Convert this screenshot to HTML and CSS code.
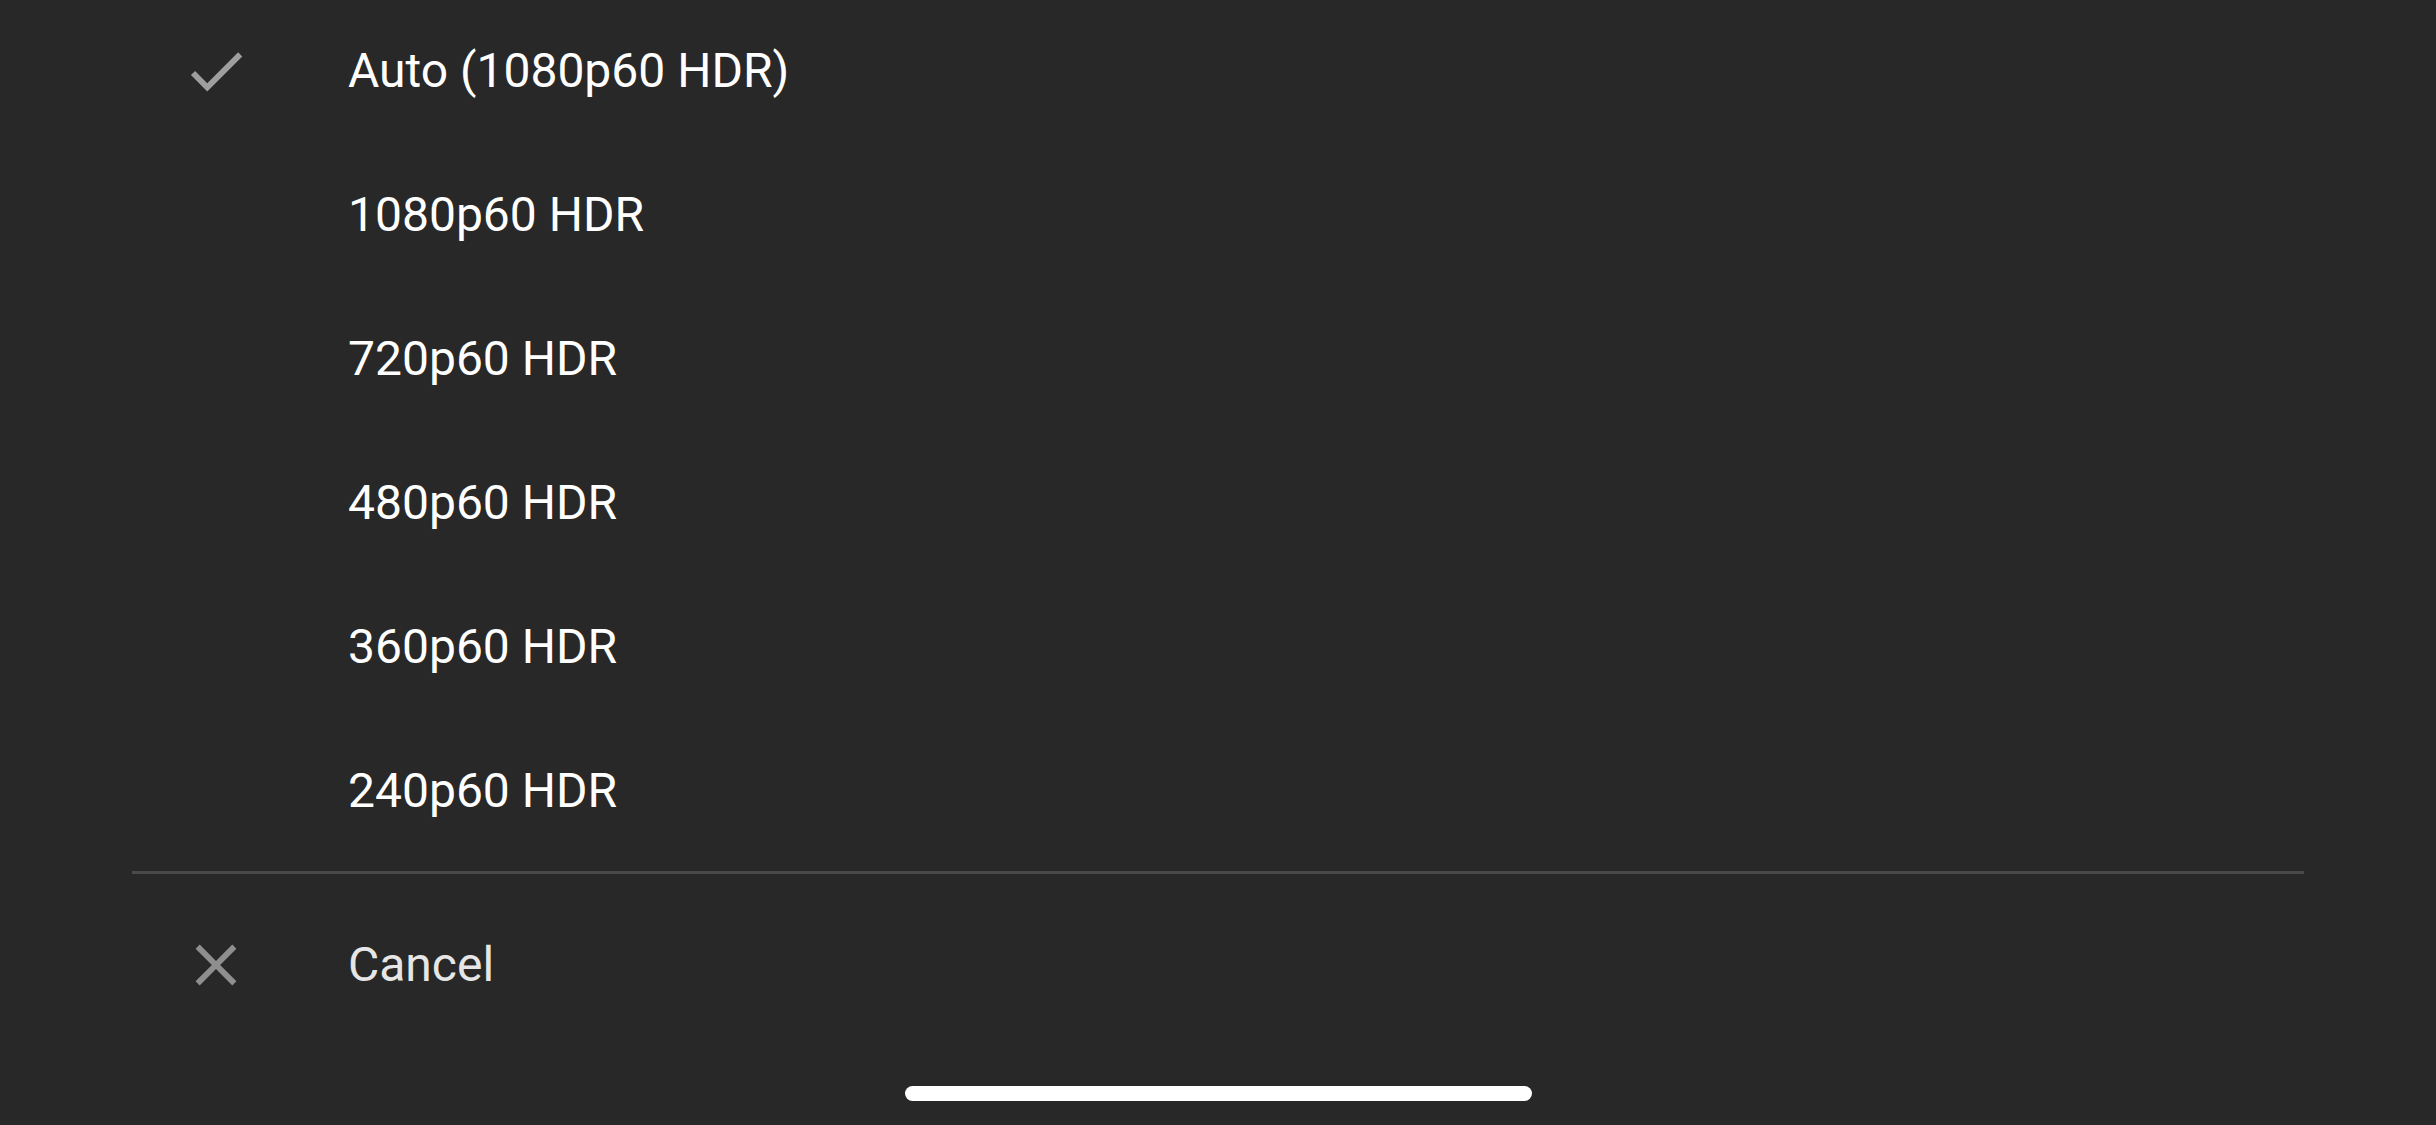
FILE: index.html
```html
<!DOCTYPE html>
<html lang="en">
<head>
    <meta charset="UTF-8">
    <meta name="viewport" content="width=device-width, initial-scale=1.0">
    <title>Quality</title>
    <link rel="stylesheet" href="styles.css">
</head>
<body>
    <div class="sheet">
        <ul class="options">
            <li class="option selected">
                <span class="icon">
                    <svg viewBox="0 0 24 24"><path d="M9 16.17L4.83 12l-1.42 1.41L9 19 21 7l-1.41-1.41z"/></svg>
                </span>
                <span class="label">Auto (1080p60 HDR)</span>
            </li>
            <li class="option"><span class="icon"></span><span class="label">1080p60 HDR</span></li>
            <li class="option"><span class="icon"></span><span class="label">720p60 HDR</span></li>
            <li class="option"><span class="icon"></span><span class="label">480p60 HDR</span></li>
            <li class="option"><span class="icon"></span><span class="label">360p60 HDR</span></li>
            <li class="option"><span class="icon"></span><span class="label">240p60 HDR</span></li>
        </ul>

        <div class="divider"></div>

        <div class="option cancel">
            <span class="icon">
                <svg viewBox="0 0 24 24"><path d="M19 6.41L17.59 5 12 10.59 6.41 5 5 6.41 10.59 12 5 17.59 6.41 19 12 13.41 17.59 19 19 17.59 13.41 12z"/></svg>
            </span>
            <span class="label">Cancel</span>
        </div>
    </div>

    <div class="home-area">
        <div class="home-indicator"></div>
    </div>
</body>
</html>
```

FILE: styles.css
```css
html, body {
    margin: 0;
    padding: 0;
}

body {
    width: 2436px;
    height: 1125px;
    overflow: hidden;
    background-color: #282828;
    font-family: Roboto, "Noto Sans", sans-serif;
    color: #ffffff;
    display: flex;
    flex-direction: column;
}

.sheet {
    padding: 0 132px;
    margin-top: -1px;
}

.options {
    list-style: none;
    margin: 0;
    padding: 0;
}

.option {
    display: flex;
    align-items: center;
    height: 144px;
    padding-left: 49px;
}

.icon {
    width: 70px;
    height: 70px;
    flex-shrink: 0;
    margin-right: 97px;
}

.icon svg {
    display: block;
    width: 70px;
    height: 70px;
}

.selected .icon svg {
    fill: #9e9e9e;
}

.label {
    font-size: 48px;
    line-height: 144px;
    letter-spacing: 0;
}

.divider {
    height: 3px;
    margin-top: 8px;
    background-color: #4a4a4a;
}

.cancel {
    margin-top: 19px;
}

.cancel .icon svg {
    fill: #8f8f8f;
}

.cancel .label {
    color: #e6e6e6;
}

.home-area {
    margin-top: auto;
    padding-bottom: 24px;
    display: flex;
    justify-content: center;
}

.home-indicator {
    width: 627px;
    height: 15px;
    border-radius: 8px;
    background-color: #ffffff;
}
```
